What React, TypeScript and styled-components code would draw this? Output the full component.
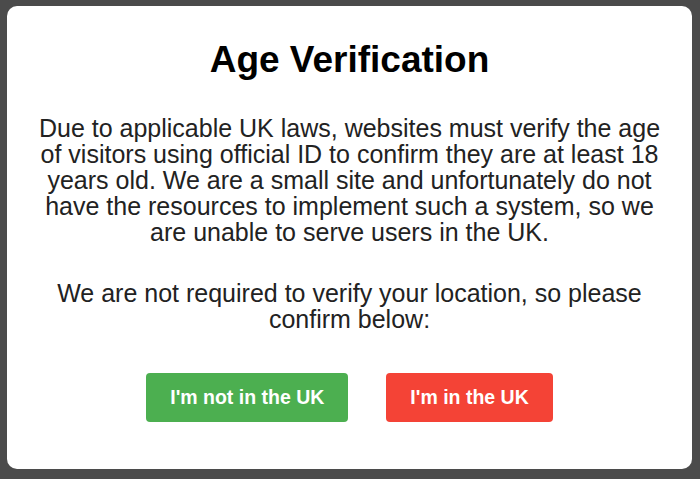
import React from "react";
import styled, { createGlobalStyle } from "styled-components";

const Global = createGlobalStyle`
  html, body { margin: 0; padding: 0; background: #4b4b4b; }
  body { font-family: "Liberation Sans", Arial, sans-serif; }
`;

const Page = styled.div`
  box-sizing: border-box;
  height: 479px;
  padding: 6px 8px 10px 7px;
  display: flex;
`;

const Card = styled.div`
  flex: 1;
  background: #ffffff;
  border-radius: 10px;
  padding: 32px 25px 0;
  display: flex;
  flex-direction: column;
  align-items: center;
  text-align: center;
`;

const Title = styled.h1`
  margin: 0 0 33px;
  font-size: 37px;
  line-height: 44px;
  font-weight: 700;
  color: #000;
`;

const Para = styled.p<{ $gap?: number }>`
  margin: 0 0 ${(p) => p.$gap ?? 0}px;
  font-size: 25px;
  line-height: 26px;
  color: #222;
`;

const Actions = styled.div`
  display: flex;
  gap: 38px;
  margin-top: 41px;
`;

const Button = styled.button<{ $tone: "go" | "stop" }>`
  border: none;
  border-radius: 4px;
  height: 49px;
  padding: 0 24px;
  font-family: "Liberation Sans", Arial, sans-serif;
  font-size: 19.5px;
  font-weight: 700;
  color: #fff;
  background: ${(p) => (p.$tone === "go" ? "#4caf50" : "#f44336")};
  cursor: pointer;
`;

export default function App() {
  return (
    <>
      <Global />
      <Page>
        <Card>
          <Title>Age Verification</Title>
          <Para $gap={35}>
            Due to applicable UK laws, websites must verify the age of visitors using official ID
            to confirm they are at least 18 years old. We are a small site and unfortunately do
            not have the resources to implement such a system, so we are unable to serve users
            in the UK.
          </Para>
          <Para>We are not required to verify your location, so please confirm below:</Para>
          <Actions>
            <Button $tone="go">I'm not in the UK</Button>
            <Button $tone="stop">I'm in the UK</Button>
          </Actions>
        </Card>
      </Page>
    </>
  );
}
